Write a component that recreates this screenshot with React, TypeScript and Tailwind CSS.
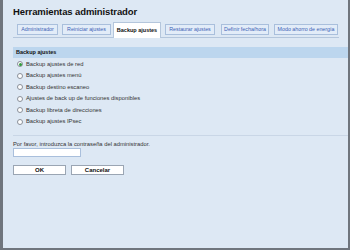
const tabs = [
  { label: "Administrador", cls: "w-[41px]" },
  { label: "Reiniciar ajustes", cls: "ml-[4px] w-[49px]" },
  { label: "Backup ajustes", cls: "ml-[2px] w-[48px]" },
  { label: "Restaurar ajustes", cls: "ml-[4px] w-[50px]" },
  { label: "Definir fecha/hora", cls: "ml-[6px] w-[48px]" },
  { label: "Modo ahorro de energía", cls: "ml-[5px] w-[64px]" },
];

const options = [
  "Backup ajustes de red",
  "Backup ajustes menú",
  "Backup destino escaneo",
  "Ajustes de back up de funciones disponibles",
  "Backup libreta de direcciones",
  "Backup ajustes IPsec",
];

export default function App() {
  return (
    <div
      className="flex h-[250px] w-[350px] flex-col overflow-hidden border-b-2 border-l-[3px] border-r-2 border-[#6f757d] bg-[#dde8f4] text-[#222]"
      style={{ fontFamily: '"Liberation Sans", Arial, sans-serif' }}
    >
      <div className="pl-[10px] pt-[5px] text-[9.5px] font-bold leading-[14px] tracking-[-0.1px] text-[#111]">
        Herramientas administrador
      </div>

      <div className="ml-[10px] mr-[9px] mt-[3px] flex items-end border-b border-[#b4c6dc] pl-[4px]">
        {tabs.map((t) => {
          const active = t.label === "Backup ajustes";
          return (
            <div
              key={t.label}
              className={
                t.cls +
                (active
                  ? " -mb-px flex h-[16px] shrink-0 items-center justify-center whitespace-nowrap border border-b-0 border-[#b4c6dc] bg-white text-[5.5px] font-bold text-[#111]"
                  : " mb-[2px] flex h-[11px] shrink-0 items-center justify-center whitespace-nowrap border border-[#a9bfdc] bg-[#e2ecf8] text-[5.3px] text-[#3b62b5]")
              }
            >
              {t.label}
            </div>
          );
        })}
      </div>

      <div className="ml-[10px] mt-[9px] flex h-[11px] items-center bg-[#bcd6ee] pl-[3px] text-[5.5px] font-bold text-[#111]">
        Backup ajustes
      </div>

      <div className="ml-[14px] mt-[0.5px] flex flex-col">
        {options.map((o, i) => (
          <div key={o} className="flex h-[11.5px] items-center gap-[3px] text-[5.8px] text-[#333]">
            <span className="flex h-[6px] w-[6px] items-center justify-center rounded-full border border-[#8a9099] bg-white">
              {i === 0 && <span className="h-[3px] w-[3px] rounded-full bg-[#2f9a3b]" />}
            </span>
            {o}
          </div>
        ))}
      </div>

      <div className="ml-[10px] mt-[7px] border-t border-[#c9d6e6]" />

      <div className="ml-[10px] mt-[4px] text-[5.8px] leading-[8px] text-[#333]">
        Por favor, introduzca la contraseña del administrador.
      </div>
      <div className="ml-[10px] mt-[0px] h-[9px] w-[68px] border border-[#a9bfdc] bg-white" />

      <div className="ml-[10px] mt-[8px] flex gap-[5px]">
        <button className="h-[10px] w-[53px] border border-[#9aa5b3] bg-white text-[6px] font-bold leading-none text-[#111]">
          OK
        </button>
        <button className="h-[10px] w-[53px] border border-[#9aa5b3] bg-white text-[6px] font-bold leading-none text-[#111]">
          Cancelar
        </button>
      </div>
    </div>
  );
}
